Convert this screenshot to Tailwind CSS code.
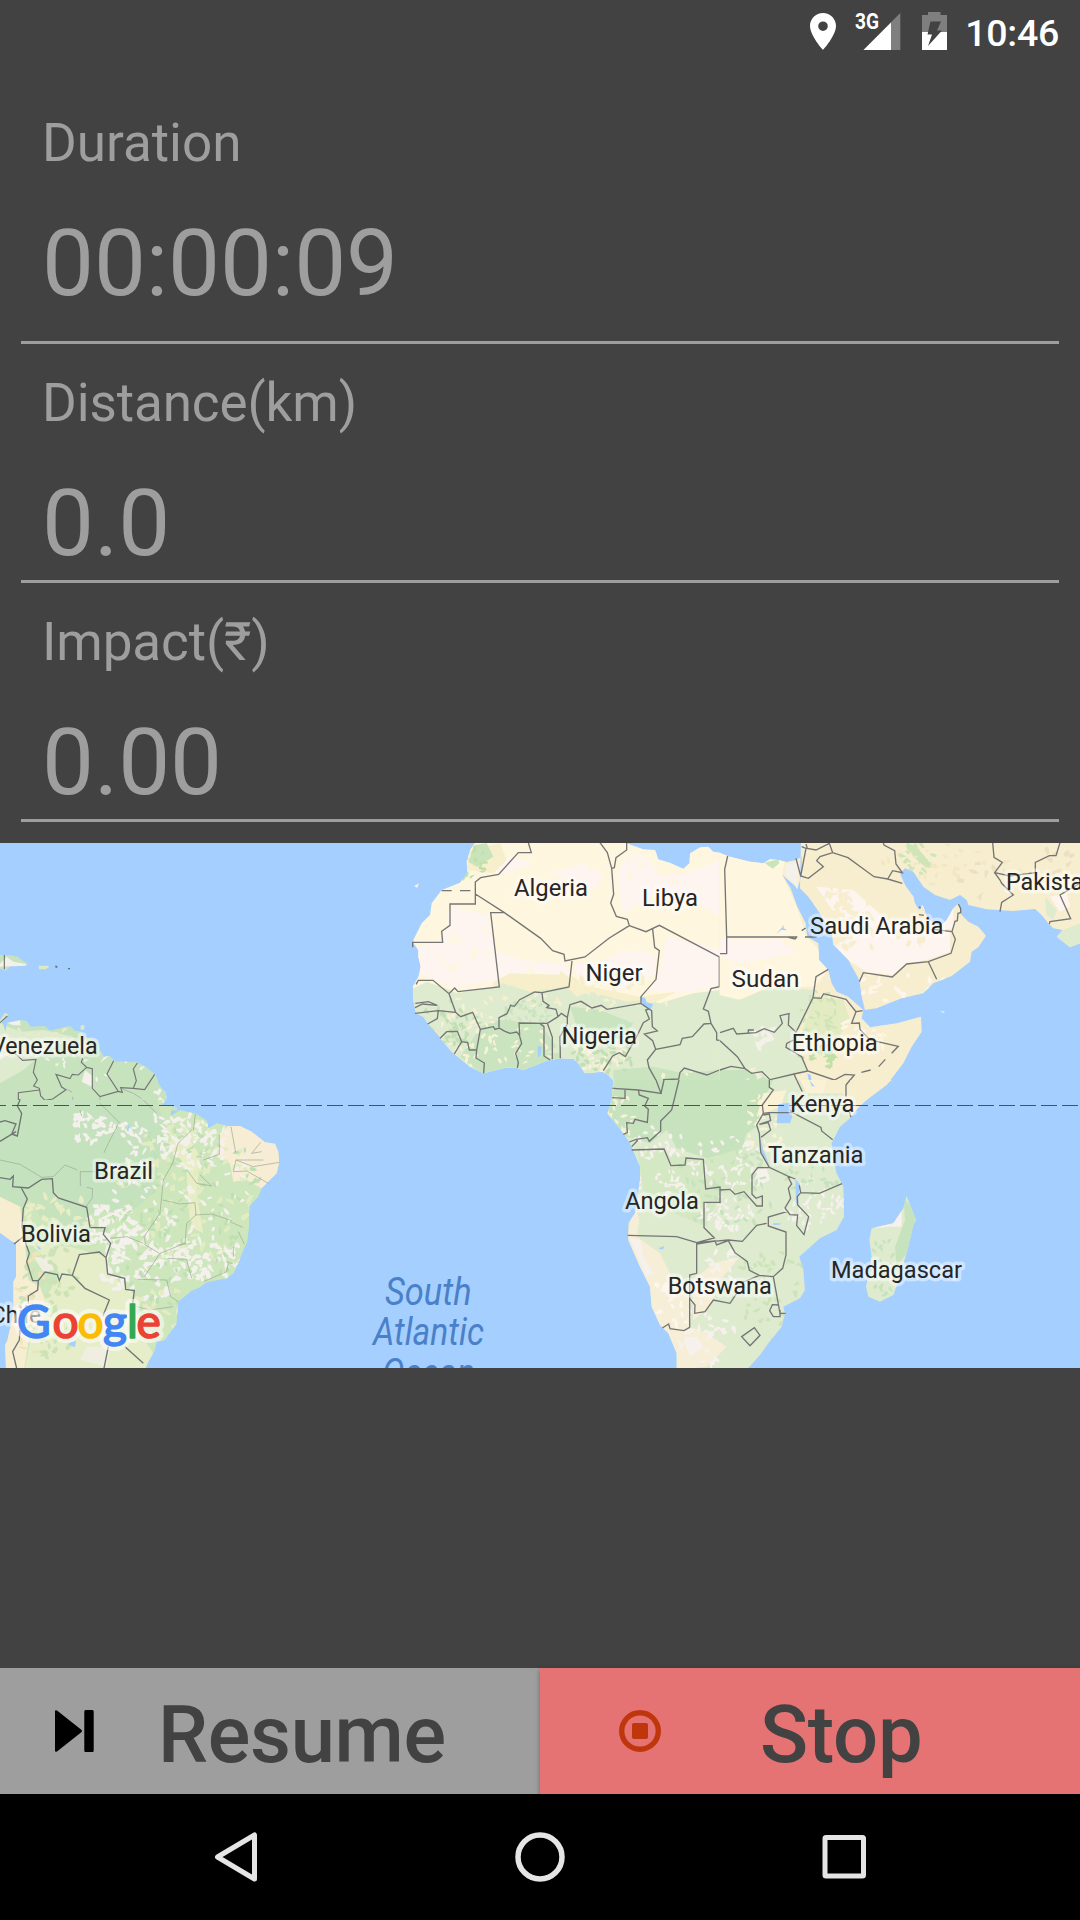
<!DOCTYPE html>
<html lang="en">
<head>
<meta charset="utf-8">
<title>Workout</title>
<script src="https://cdn.jsdelivr.net/npm/@tailwindcss/browser@4"></script>
</head>
<body class="w-[1080px] h-[1920px] overflow-hidden bg-[#424242] flex flex-col font-['Roboto',sans-serif]">

<!-- Status bar -->
<header class="h-[84px] shrink-0 flex items-start justify-end pr-[21px]">
  <svg class="w-[150px] h-[60px] mr-[11px]" viewBox="804 0 150 60">
    <path fill="#fff" fill-rule="evenodd" d="M823 13c-7.200 0-13 5.800-13 13 0 9.700 13 24 13 24s13-14.300 13-24c0-7.200-5.800-13-13-13zm0 18a4.800 4.800 0 1 1 0-9.600 4.800 4.800 0 0 1 0 9.600z"/>
    <path fill="#7f7f7f" d="M900.300 13V50H863.500z"/>
    <path fill="#fff" d="M891 22.500V50H863.500z"/>
    <text x="855" y="29" font-size="22" font-weight="700" fill="#fff" textLength="24" lengthAdjust="spacingAndGlyphs" stroke="#424242" stroke-width="2" paint-order="stroke">3G</text>
    <path fill="#7f7f7f" d="M922 15h6v-3h12.500v3h6.500v17h-25z"/>
    <path fill="#fff" d="M922 32h25v18h-25z"/>
    <path fill="#424242" d="M930.500 21.500H941l-4 9h5l-14 15.500 4-11.500h-4.500z"/>
  </svg>
  <span class="w-[94px] text-right whitespace-nowrap text-[37.500px] tracking-[-0.3px] leading-[44px] font-medium text-white pt-[11px]">10:46</span>
</header>

<!-- Stats -->
<main class="h-[759px] shrink-0 px-[21px] text-[#9e9e9e]">
  <section class="h-[260px] border-b-[3px] border-[#9e9e9e] pl-[21px] pt-[27px]">
    <h2 class="text-[53px] leading-[64px] font-normal">Duration</h2>
    <p class="text-[92.500px] tracking-[-0.1px] leading-[108px] mt-[35px]">00:00:09</p>
  </section>
  <section class="h-[239px] border-b-[3px] border-[#9e9e9e] pl-[21px] pt-[27px]">
    <h2 class="text-[53px] tracking-[-0.1px] leading-[64px] font-normal">Distance(km)</h2>
    <p class="text-[92.500px] tracking-[-0.1px] leading-[108px] mt-[35px]">0.0</p>
  </section>
  <section class="h-[239px] border-b-[3px] border-[#9e9e9e] pl-[21px] pt-[27px]">
    <h2 class="text-[53px] tracking-[-0.1px] leading-[64px] font-normal">Impact(₹)</h2>
    <p class="text-[92.500px] tracking-[-0.1px] leading-[108px] mt-[35px]">0.00</p>
  </section>
</main>

<!-- Map -->
<svg class="block w-[1080px] h-[525px] shrink-0 bg-[#a4cfff]" viewBox="0 843 1080 525">
  <defs>
    <clipPath id="cNW"><path d="M0 550L8 548 16 575 22 548 60 540 80 543 92 560 135 558 150 572 190 562 210 558 225 572 245 575 255 590 290 600 300 630 312 650 330 648 345 664 410 666 440 682 468 706 478 735 498 760 500 780 485 795 475 805 485 797 530 800 533 812 0 812Z"/></clipPath>
    <clipPath id="cSW"><path d="M0 0L490 0 480 15 515 18 512 48 540 30 590 42 620 62 625 85 650 70 685 78 720 78 755 95 795 127 825 131 835 155 838 185 830 220 785 265 775 290 748 318 747 380 742 425 730 450 715 490 700 520 680 535 620 547 600 562 575 572 535 605 532 640 530 670 495 720 470 725 465 750 445 785 435 810 18 810 15 735 22 722 40 640 40 545 48 530 48 430 30 420 0 398Z"/></clipPath>
    <clipPath id="cWA"><path d="M345 8L330 30 320 65 322 100 300 128 245 150 215 190 210 225 185 250 160 300 160 310 175 330 175 350 182 380 175 410 158 440 160 480 168 520 190 530 205 552 240 590 245 600 275 635 330 680 370 700 440 682 470 683 490 690 560 662 600 655 640 657 655 670 675 700 728 695 745 705 760 722 755 780 745 812 1082 812 1082 38 1060 35 1045 20 1020 22 990 40 988 70 970 86 930 68 895 58 885 30 850 28 800 10 790 0 350 0Z"/></clipPath>
    <clipPath id="cEA"><path d="M-2 38L30 50 90 65 130 70 150 58 175 60 200 66 228 60 245 50 245 105 232 148 222 135 187 105 212 145 232 200 257 250 262 290 295 310 297 360 325 390 335 430 350 455 385 470 430 510 425 535 450 562 530 550 603 530 605 575 575 620 550 670 500 735 440 780 405 812 -2 812Z M243 0L240 145 265 170 300 220 335 280 340 315 385 360 418 420 425 470 435 510 470 505 545 475 610 460 640 430 695 408 750 365 755 335 775 322 798 287 775 260 745 245 725 225 715 190 700 205 680 240 660 260 625 240 608 195 597 210 585 190 580 170 555 135 540 100 555 85 580 95 610 140 645 165 690 180 720 165 740 180 745 195 800 208 880 213 945 207 965 225 985 250 1000 265 1028 270 1010 290 1050 322 1082 310 1082 0Z"/></clipPath>
    <clipPath id="cSA"><path d="M165 0L155 60 142 100 190 160 210 190 240 260 240 300 225 400 205 430 205 480 240 560 270 620 275 680 300 735 325 760 350 820 350 870 560 870 600 825 625 790 665 740 675 700 670 680 720 655 735 630 730 570 718 530 780 475 830 450 852 410 850 320 830 280 820 240 815 190 840 140 870 115 900 75 995 0Z M1040 348L1068 420 1060 435 1045 500 1020 590 1000 645 960 665 925 650 918 620 935 530 928 480 935 445 1000 430 1030 385Z"/></clipPath>
  </defs>

  <!-- Guyanas, Venezuela and the Antilles -->
  <g transform="translate(0 840) scale(.33333)">
    <path fill="#c7e3be" d="M0 345H30L52 350 84 373 75 378 30 378 18 392 0 386Z"/>
    <path fill="#f4f0ea" d="M0 372L20 350 40 365 78 372 76 377 0 380Z"/>
    <path fill="#dceac2" d="M116 377h28l3 4-10 7h-20z"/>
    <path fill="#6d6d68" d="M165 377h7v6h-5zM204 384h6v4h-6z"/>
    <path fill="#dceac2" d="M242 556h12l-2 13h-10zM-5 548L15 518 26 524 0 552Z"/>
    <g clip-path="url(#cNW)">
      <path fill="#c7e3be" d="M0 500H600V830H0Z"/>
      <path fill="#deebce" d="M0 550L60 575 130 570 220 590 110 655 70 690 0 730Z"/>
      <path fill="#f4f0ea" d="M22 548L60 541 62 556 38 555ZM0 640L30 640 0 660ZM255 690l25 20-5 30-30-15zM312 650l18-5-30 25z"/>
      <g data-speckle="270 660 200 60 24 9 #f4f0ea"></g>
      <g data-speckle="490 775 30 30 8 12 #f4f0ea"></g>
      <g data-speckle="150 590 150 30 22 10 #ecebc8"></g>
    </g>
    <g fill="none" stroke="#757575" stroke-width="3.500">
      <path d="M13 345V388M22 528L0 548M45 640L68 661 108 658 100 697 112 720 101 738 118 745 122 768 135 781 158 777 198 749 185 741 168 703 210 716 217 703 235 705 260 682 244 667 248 655M260 682L277 686V745L300 770 355 754 321 702 341 662M355 754L367 757 362 743 400 745 434 749 464 703M400 745L409 722 400 687 412 669M118 750L55 758V778L70 785 52 795 60 810"/>
      <path stroke="#9aa598" stroke-width="2" d="M200 748L216 756M218 770L222 810M300 770V795L315 810M368 748L400 760 425 776M430 793L445 810"/>
    </g>
  </g>

  <!-- Brazil, Bolivia, Chile -->
  <g transform="translate(0 1100) scale(.33333)">
    <g clip-path="url(#cSW)">
      <path fill="#cde6bb" d="M0 0H850V820H0Z"/>
      <path fill="#c5e2be" d="M0 0H470L500 90 480 170 460 280 400 330 270 340 190 290 120 240 70 320 0 300Z"/>
      <path fill="#f7edd5" d="M685 78L730 70 850 120 850 220 785 265 740 240 700 245 690 190 650 170 660 100Z"/>
      <path fill="#f7edd0" d="M0 290L60 320 75 430 85 540 120 560 150 640 90 700 70 820 0 820Z"/>
      <path fill="#e6edc9" d="M90 430L210 440 320 470 340 530 400 580 420 700 460 760 440 820 70 820 110 640 180 520Z"/>
      <path fill="#c7e3be" d="M80 280L130 240 190 290 265 325 270 390 200 400 120 350Z"/>
      <path fill="#efeee0" d="M100 470L150 475 165 510 130 515ZM260 740L330 740 320 800 240 780Z"/>
      <path fill="#e9edc5" d="M500 130L560 100 600 170 590 280 610 400 570 380 560 220Z"/>
      <g data-speckle="560 270 200 230 90 17 #e2ecc2"></g>
      <g data-speckle="540 250 210 220 110 12 #f4f1ec"></g>
      <g data-speckle="265 85 55 50 26 15 #f4f1ec"></g>
      <g data-speckle="360 80 80 30 20 13 #f4f1ec"></g>
      <g data-speckle="340 380 80 80 44 19 #f4f1ec"></g>
      <g data-speckle="440 500 140 100 80 17 #f4f1ec"></g>
      <g data-speckle="640 470 100 70 46 16 #f4f1ec"></g>
      <g data-speckle="570 120 100 90 42 15 #f4f1ec"></g>
      <g data-speckle="470 640 90 90 40 16 #e6ebc4"></g>
      <g data-speckle="560 350 260 280 120 13 #bfe0b2"></g>
      <g data-speckle="180 340 110 60 25 18 #e8edc6"></g>
      <g data-speckle="150 600 90 180 50 16 #cde3b5"></g>
      <g data-speckle="470 100 100 60 20 14 #f4f1ec"></g>
      <g data-speckle="90 620 60 180 20 15 #efe3b8"></g>
    </g>
    <g fill="#a4cfff"><path d="M380 90l8-22-3 28zM108 435l15 10-5 5zM208 728l20-6-3 20-18-8z"/></g>
    <g fill="none" stroke="#9aa88f" stroke-width="2">
      <path d="M355 72L325 130 312 158M0 180L60 193 125 232 160 230 195 195 232 210M240 215H285M241 215V258M260 262L278 266 276 295 258 320M490 240L480 340 432 410 437 432M488 300L540 312 585 308 588 345 560 370 555 430 480 460 433 530M585 345L635 342 695 362M478 460L432 432M505 475L560 478 575 535M560 430L530 436M693 80L707 158M658 105V163L610 180M534 130L518 190 490 240M575 90L534 130M586 42L580 92M565 215L590 250 635 258 600 225M782 127L755 160 785 155M838 187L760 200 708 180 700 215 740 213 805 250M707 180L790 180M680 485L700 492M610 545L680 515 685 490M413 538L500 540 512 590 535 605M330 415L380 410 430 430M715 395L733 432M700 440V470M690 365L728 382M240 30L245 48M300 10L360 70M430 0L470 40M410 620L450 630 520 620"/>
    </g>
    <g fill="none" stroke="#6f7573" stroke-width="4">
      <path d="M60 0L52 18 65 40 52 108 35 102 48 72 15 62 0 66M0 124L48 95M0 233L30 238 40 228 38 260 85 264 125 238 157 236 160 278 175 294 260 322 270 383H315L310 403 332 430 318 473 298 456 238 464 217 526 186 522 178 542 172 524 135 516 115 542H98L80 485 88 460 78 433 66 380 70 325 82 297 64 264M115 542L113 570 85 588V612M70 410L42 432M318 473L323 522 374 535 377 568 403 572 398 610M217 526L255 565 328 600 308 650M325 740L312 805M375 740L430 790M60 690L58 720 38 755 50 805"/>
    </g>
  </g>

  <!-- West and North Africa -->
  <g transform="translate(360 840) scale(.33333)">
    <g clip-path="url(#cWA)">
      <path fill="#fff6df" d="M0 0H1085V815H0Z"/>
      <path fill="#fff5f0" d="M800 40L860 50 900 110 980 100 1082 60 1082 230 1000 180 870 170 790 220 770 110ZM270 200L390 225 405 330 480 360 610 370 630 400 560 420 410 420 290 440 250 430 180 400 170 320 250 300ZM640 370L720 370 790 330 880 340 890 400 800 450 740 420 660 430ZM920 290L1082 330 1082 440 960 460 870 450 900 400ZM340 90L450 50 520 70 440 100ZM570 100L680 70 730 110 700 150Z"/>
      <path fill="#f7eecb" d="M330 30L420 10 440 60 400 100 320 90ZM400 425L450 400 620 405 640 430 840 470 950 455 860 500 640 490 400 460Z"/>
      <path fill="#c9e4ba" d="M345 15L380 10 400 50 350 80 325 65Z"/>
      <path fill="#deebcf" d="M150 450L200 425 270 450 290 460 400 440 430 430 510 455 620 440 650 470 690 455 800 485 850 480 900 490 1000 460 1082 450 1082 815 740 815 720 710 300 710 150 520Z"/>
      <path fill="#c9e4be" d="M350 580L480 585 560 640 600 640 600 680 370 705 300 650ZM360 560L420 540 540 550 590 620 480 680 380 690ZM760 690L880 680 970 700 1082 690 1082 820 740 820 760 740ZM630 500L720 510 820 550 800 580 650 560Z"/>
      <g data-speckle="330 60 50 60 25 11 #bfe0a8"></g>
      <g data-speckle="310 590 110 90 45 12 #f7f1d6"></g>
      <g data-speckle="480 620 110 60 22 11 #f7f1d6"></g>
      <g data-speckle="500 520 80 40 35 12 #c9e4be"></g>
      <g data-speckle="270 550 90 70 35 13 #c2dfb4"></g>
      <g data-speckle="720 640 80 60 45 13 #f7f1d6"></g>
      <g data-speckle="620 480 330 30 34 12 #f6f0ce"></g>
      <g data-speckle="740 640 100 60 35 14 #c2dfb4"></g>
      <g data-speckle="640 425 250 22 26 20 #f7eecb"></g>
      <g data-speckle="820 110 240 90 14 22 #fff6df"></g>
      <g data-speckle="400 330 180 90 20 18 #fff6df"></g>
      <g data-speckle="970 740 90 50 16 12 #f7f1d6"></g>
    </g>
    <path fill="#f7f1ea" d="M162 138l15-8-5 14z"/>
    <path fill="#a4cfff" d="M840 470l15 3 5 14 20 5-8 16-20-8zM533 618l12 2-3 25-8 8z"/>
    <g fill="none" stroke="#757575" stroke-width="4">
      <path d="M505 8L514 38H475L416 103 362 113 346 126V192H270V256L245 274 248 307H158V322M245 152H275M300 152H331M346 162L432 217 542 295 578 332 612 343 615 363 675 351 748 294 808 257 802 238 769 229 752 189 761 163 755 85 742 38 720 8M755 85L763 83 768 53 800 30V8M808 257L858 275 898 256 1078 351V440L1053 446 1030 507 1045 514 1053 550 1032 552 997 590 967 595 960 614 887 628 862 660 867 683 903 748 911 719 956 717 960 698 973 684 1041 705 1078 690M432 217L392 218 418 441 294 455 284 444 267 461 219 421H175L168 433M267 461L287 517 302 530 338 517 361 568 350 630 348 654 373 669 371 700M287 517L235 512 165 520M166 490L205 485 232 496 188 492 165 503M235 512L232 536 203 552M240 595L260 575 292 574 305 605 283 642M305 605L323 608 328 630 350 630M361 568L400 560 405 568 417 564 435 574 450 580 470 576 478 585 485 610 467 640 475 668 472 684M417 564V533L441 521 452 496 463 499 479 479 524 456 546 458 627 441 636 363M546 458L549 484 567 496 560 503 588 508 594 530 562 550 477 549 479 585M538 549L552 560 552 648 570 660M562 550L577 592V658M594 530L604 520 622 532V552L600 590 601 655M622 532L630 494 663 484 696 504 724 496 741 508 843 490 867 507 857 510 868 537 850 548 830 590 796 650 778 638 758 648 730 692M843 490V470L888 418 898 332 884 322 878 268M867 507L875 512 877 560 892 573 853 582 878 602 887 628M757 745L830 748 903 758V748M795 748V777L755 775M835 750L860 765 862 780 850 790 866 810M956 717L935 810M1053 550L1070 578V600L1082 602"/>
    </g>
  </g>

  <!-- East Africa, Arabia, Iran and Pakistan -->
  <g transform="translate(720 840) scale(.33333)">
    <g clip-path="url(#cEA)">
      <path fill="#f7eecf" d="M-2 0H1085V815H-2Z"/>
      <path fill="#fff6df" d="M-2 30H200L187 105 230 200 260 290 297 330 325 390 285 440 180 440 50 480 -2 470Z"/>
      <path fill="#f4f0ea" d="M195 75L235 65 232 140 195 105Z"/>
      <path fill="#c9e4ba" d="M133 68L175 58 178 70 158 86Z"/>
      <path fill="#fff5f0" d="M290 140L400 150 500 240 560 270 690 275 690 335 620 360 560 370 520 405 440 395 385 360 340 310 400 290 330 200ZM0 300L180 300 230 340 60 370 0 350ZM640 240L700 205 700 265 660 270ZM990 170L1040 160 1050 200 1020 215Z"/>
      <path fill="#deebcf" d="M-2 465L60 480 150 440 280 450 290 475 230 580 210 620 245 650 260 690 225 705 240 760 160 815 -2 815ZM270 720L370 730 375 780 290 780ZM1030 270L1080 250 1080 310 1050 322 1010 290ZM975 170L1010 210 1000 240 980 225Z"/>
      <path fill="#c7e3be" d="M-2 690L80 690 150 720 150 750 125 815 -2 815Z"/>
      <path fill="#e3ebc3" d="M285 470L370 480 390 540 350 600 240 590Z"/>
      <path fill="#cfe5b8" d="M560 8L590 20 640 80 620 85 580 50Z"/>
      <g data-speckle="470 230 180 110 55 22 #f7eecf"></g>
      <g data-speckle="360 220 90 80 40 15 #f7eecf"></g>
      <g data-speckle="300 520 60 70 30 12 #cfe5b8"></g>
      <g data-speckle="300 650 60 40 26 13 #c2dfa8"></g>
      <g data-speckle="420 590 90 60 20 13 #fdf6e3"></g>
      <g data-speckle="560 440 160 50 25 15 #fff5ec"></g>
      <g data-speckle="130 590 30 40 8 20 #f4f0ea"></g>
      <g data-speckle="700 80 220 70 30 13 #f1e7c3"></g>
      <g data-speckle="770 110 60 70 6 18 #ebe0c5"></g>
      <g data-speckle="600 60 60 50 18 14 #cfe5b8"></g>
      <g data-speckle="90 740 70 60 14 14 #f3efd0"></g>
      <g data-speckle="1010 60 60 50 8 16 #ebe0c5"></g>
    </g>
    <path fill="#a4cfff" d="M168 283l25-29-3 10 12 7-18-2zM262 700l10 5 3 20 10 15-18-15z"/>
    <path fill="#f7f1ea" d="M660 512l15 3-5 4z"/>
    <g fill="none" stroke="#757575" stroke-width="4">
      <path d="M23 48L14 88 20 291H232M255 291H290M20 291V341H0M205 292L225 297 230 292M245 272L257 264M228 55L242 108 265 115 310 80 290 62 300 50 338 38 384 53 462 110 503 117 547 130M242 108L258 25 245 20M258 12L262 25 288 30 328 10 338 38M503 117L518 92 547 98 528 72 524 32 492 15 490 8M818 8L822 52 847 67 824 98 840 120 845 130 880 165 845 187 840 215M824 98L870 108 946 98V67L988 47H1008L1020 8M1080 130L1020 165 1052 236 990 245 988 252M715 192L722 205V218L714 220 712 242 705 244 696 275 706 298 693 340 625 365 560 372 517 411 430 398 418 425M625 365L650 418M696 275L640 268M597 200L602 205M597 224L612 226M325 388L288 410 279 473 303 475 311 461 378 478 408 515 428 512M408 515L395 550 418 549 420 568 450 600 535 619 515 640M279 473L228 577M496 658L476 680M452 690L424 697M220 600L200 610 198 622 245 650 263 693 343 720 375 703 403 705 378 735V780M263 693L222 702 150 719 160 750 125 800M222 702L243 750M228 577L205 555 207 521 180 527 187 550 163 577 132 566 108 578 50 582 40 565 0 578M85 580V570H102M0 602L52 650 75 686 33 679 0 690M75 686L95 700 126 695 150 719"/>
    </g>
  </g>

  <!-- Central and Southern Africa, Madagascar -->
  <g transform="translate(560 1080) scale(.33333)">
    <g clip-path="url(#cSA)">
      <path fill="#deebcf" d="M100 0H1100V880H100Z"/>
      <path fill="#f7eecf" d="M720 0H1000L870 115 850 40 750 40Z"/>
      <path fill="#c7e3be" d="M155 0H640L605 70 590 140 560 160 545 210 440 235 350 205 320 150 270 190 200 170 130 100Z"/>
      <path fill="#d5e8c4" d="M230 200L430 240 560 200 580 330 480 340 440 440 340 400 250 330Z"/>
      <path fill="#f7eed8" d="M222 360L238 420 230 470 300 520 340 600 390 610 390 740 440 760 500 800 440 860 340 870 320 760 250 690 200 480ZM400 600L460 550 540 530 480 600 450 680 400 720Z"/>
      <path fill="#f6f1ec" d="M210 475L240 480 250 530 280 580 260 590ZM370 775L410 770 430 800 390 830ZM580 270L620 265 630 300 590 320Z"/>
      <path fill="#c7e3be" d="M1030 350L1070 400 1060 440 1040 520 1010 560 1005 500 1035 420Z"/>
      <path fill="#f6f1ec" d="M1025 390L1025 440 985 440 940 445 990 425Z"/>
      <path fill="#fbf2d5" d="M610 40L680 30 660 80 590 110ZM720 0L800 0 790 40 740 40Z"/>
      <g data-speckle="300 190 80 50 34 11 #f6f1ec"></g>
      <g data-speckle="500 250 120 80 60 11 #f6f1ec"></g>
      <g data-speckle="300 330 100 60 38 11 #f6f1ec"></g>
      <g data-speckle="500 400 80 50 38 12 #f6f1ec"></g>
      <g data-speckle="760 370 90 80 50 11 #f6f1ec"></g>
      <g data-speckle="620 130 60 100 40 11 #fbf2d5"></g>
      <g data-speckle="760 270 90 70 30 13 #c7e3be"></g>
      <g data-speckle="500 330 180 130 50 13 #c7e3be"></g>
      <g data-speckle="490 560 60 60 16 14 #f6f1ec"></g>
      <g data-speckle="640 640 110 160 40 13 #cbe4b8"></g>
      <g data-speckle="440 760 90 100 30 14 #f6f1ec"></g>
      <g data-speckle="340 660 60 90 18 14 #fdf6ec"></g>
      <g data-speckle="180 110 40 70 26 11 #f7f1d6"></g>
      <g data-speckle="970 560 40 90 22 12 #c7e3be"></g>
    </g>
    <g fill="#a4cfff"><path d="M655 73L690 68 697 110 690 130 650 130ZM748 0L765 20 755 18ZM597 160L610 210 628 255 603 215ZM706 298L720 312 712 370 728 392 708 370ZM298 503L312 498 310 508 298 508ZM640 430L662 430 660 434 640 435Z"/></g>
    <g fill="none" stroke="#757575" stroke-width="4">
      <path d="M160 25L235 30 303 40 288 0M303 40L312 0M195 30V55L157 53M235 30L238 45 265 55 254 78 265 88 262 127 225 118 220 130 200 128 202 158 190 163M357 0L335 90 302 123V153L268 184 262 173 228 178 208 186M228 178L232 182 215 200M215 210L312 207 333 257 375 255 378 234 430 238 437 327 480 321V367H432V443L463 474 410 488 350 470 203 466M480 330L510 328 525 343 552 335 590 378H607V348L588 355 576 343V285L593 263 628 262 602 217 598 160 590 135 610 100 607 75 640 30 628 22V0M598 133L625 128 632 150 603 172M610 100L625 98H698L783 142 785 153 818 179M610 105L628 102 632 122 598 133M698 98L690 90M628 262L683 288 706 297M683 288L695 312 685 325 692 355 675 384 690 404 713 405 710 437 732 464 746 410 713 375 712 350 722 338 718 316M722 338L778 340 846 311M683 394L625 411V438L678 456V525L668 565 640 590 598 586 568 571 562 545 525 518 505 482 470 495 465 483 410 488V580L389 585V742L372 752 330 746 326 732 307 744M410 492L460 484 505 480 547 484 590 436 620 430M389 655L405 675 404 700 435 695 460 660 510 670 530 640M540 610L598 586M640 590L660 700H677M655 675L637 674 629 692 640 710H660L660 690M545 770L583 743 600 766 570 797ZM710 0L727 35M870 0L858 15V50M868 95L873 112"/>
    </g>
  </g>

  <!-- Equator -->
  <path d="M-9 1105.500H1080" stroke="#84384f" stroke-width="1.300" stroke-dasharray="15.500 5.500" fill="none" shape-rendering="crispEdges"/>

  <!-- Country labels -->
  <g font-size="24.500" fill="#262626" stroke="#fff" stroke-opacity=".45" stroke-width="7" stroke-linejoin="round" paint-order="stroke">
    <text x="-9" y="1053.700" textLength="106.500" lengthAdjust="spacingAndGlyphs">Venezuela</text>
    <text x="94" y="1178.700" textLength="59" lengthAdjust="spacingAndGlyphs">Brazil</text>
    <text x="21" y="1241.700" textLength="70" lengthAdjust="spacingAndGlyphs">Bolivia</text>
    <text x="-9" y="1322.700" textLength="50" lengthAdjust="spacingAndGlyphs">Ch<tspan fill="#999">ile</tspan></text>
    <text x="514" y="895.700" textLength="74" lengthAdjust="spacingAndGlyphs">Algeria</text>
    <text x="642" y="906" textLength="56" lengthAdjust="spacingAndGlyphs">Libya</text>
    <text x="585.500" y="980.700" textLength="57" lengthAdjust="spacingAndGlyphs">Niger</text>
    <text x="561.500" y="1043.500" textLength="75.500" lengthAdjust="spacingAndGlyphs">Nigeria</text>
    <text x="810" y="933.700" textLength="133.500" lengthAdjust="spacingAndGlyphs">Saudi Arabia</text>
    <text x="1006" y="889.700" textLength="90" lengthAdjust="spacingAndGlyphs">Pakistan</text>
    <text x="731.500" y="986.700" textLength="68" lengthAdjust="spacingAndGlyphs">Sudan</text>
    <text x="791.700" y="1050.700" textLength="86" lengthAdjust="spacingAndGlyphs">Ethiopia</text>
    <text x="790" y="1111.700" textLength="64.500" lengthAdjust="spacingAndGlyphs">Kenya</text>
    <text x="768" y="1162.700" textLength="95.500" lengthAdjust="spacingAndGlyphs">Tanzania</text>
    <text x="625" y="1208.700" textLength="74" lengthAdjust="spacingAndGlyphs">Angola</text>
    <text x="667.700" y="1293.700" textLength="104" lengthAdjust="spacingAndGlyphs">Botswana</text>
    <text x="831" y="1277.700" textLength="131" lengthAdjust="spacingAndGlyphs">Madagascar</text>
  </g>
  <g font-size="38" font-style="italic" fill="#4a80c8">
    <text x="385" y="1304.500" textLength="86.500" lengthAdjust="spacingAndGlyphs">South</text>
    <text x="373" y="1345" textLength="111" lengthAdjust="spacingAndGlyphs">Atlantic</text>
    <text x="382" y="1386" textLength="93" lengthAdjust="spacingAndGlyphs">Ocean</text>
  </g>

  <!-- Attribution -->
  <g font-family="Lato, sans-serif" font-size="46" stroke-linejoin="round">
    <text x="17 52.500 77.500 103 127 136.500" y="1338" fill="none" stroke="#fff" stroke-opacity=".55" stroke-width="10">Google</text>
    <text x="17 52.500 77.500 103 127 136.500" y="1338" stroke-width="1.600"><tspan fill="#4285f4" stroke="#4285f4">G</tspan><tspan fill="#ea4335" stroke="#ea4335">o</tspan><tspan fill="#fbbc05" stroke="#fbbc05">o</tspan><tspan fill="#4285f4" stroke="#4285f4">g</tspan><tspan fill="#34a853" stroke="#34a853">l</tspan><tspan fill="#ea4335" stroke="#ea4335">e</tspan></text>
  </g>
</svg>

<div class="flex-1"></div>

<!-- Actions -->
<div class="h-[126px] shrink-0 flex text-[79.500px] tracking-[-0.3px] leading-[94px] font-medium text-[#424242]">
  <button class="w-[540px] bg-[#9e9e9e] flex items-center pl-[55px]">
    <svg class="w-[39px] h-[42px] shrink-0" viewBox="0 0 39 42"><path d="M0 1.500Q0-.5 2 .500L26 19.500Q28 21 26 22.500L2 41.500Q0 42.500 0 40.500ZM30.500 0H37.500Q38.700 0 38.700 1.500V40.500Q38.700 42 37.500 42H30.500Q29.300 42 29.300 40.500V1.500Q29.300 0 30.500 0Z"/></svg>
    <span class="ml-[64px] pt-[8px]">Resume</span>
  </button>
  <button class="w-[540px] bg-[#e57373] flex items-center pl-[79px] shadow-[0_2px_5px_rgba(0,0,0,0.35)]">
    <svg class="w-[42px] h-[42px] shrink-0" viewBox="0 0 42 42"><circle cx="21" cy="21" r="18.300" fill="none" stroke="#bf360c" stroke-width="5.400"/><rect x="13" y="13" width="16" height="16" rx="2" fill="#bf360c"/></svg>
    <span class="ml-[99px] pt-[8px]">Stop</span>
  </button>
</div>

<!-- Navigation bar -->
<nav class="h-[126px] shrink-0 bg-black flex items-center justify-between px-[212px]">
  <svg class="w-[50px] h-[54px]" viewBox="212 1830 50 54"><path d="M254.500 1835V1879L217.500 1857Z" fill="none" stroke="#e5e5e5" stroke-width="5" stroke-linejoin="round"/></svg>
  <svg class="w-[54px] h-[54px]" viewBox="513 1830 54 54"><circle cx="540" cy="1857" r="22" fill="none" stroke="#e5e5e5" stroke-width="5.500"/></svg>
  <svg class="w-[50px] h-[54px]" viewBox="818 1830 50 54"><rect x="825" y="1837.500" width="38.500" height="38.500" rx="1" fill="none" stroke="#e5e5e5" stroke-width="5"/></svg>
</nav>

<script>
  // Scatter small terrain patches: "cx cy rx ry count size color"
  let seed = 7;
  const rnd = () => (seed = (seed * 16807) % 2147483647) / 2147483647;
  document.querySelectorAll('[data-speckle]').forEach(g => {
    const p = g.dataset.speckle.split(' ');
    const [cx, cy, rx, ry, n, size] = p.slice(0, 6).map(Number);
    let d = '';
    for (let i = 0; i < n; i++) {
      const a = rnd() * 6.283, r = Math.sqrt(rnd());
      const x = cx + Math.cos(a) * r * rx, y = cy + Math.sin(a) * r * ry;
      const tilt = rnd() * 3.14;
      for (let k = 0; k < 6; k++) {
        const t = k * 1.047, q = size * (0.35 + rnd() * 0.85);
        const u = Math.cos(t) * q, v = Math.sin(t) * q * 0.5;
        d += (k ? 'L' : 'M') + (x + u * Math.cos(tilt) - v * Math.sin(tilt)).toFixed(1) + ' ' + (y + u * Math.sin(tilt) + v * Math.cos(tilt)).toFixed(1);
      }
      d += 'Z';
    }
    const path = document.createElementNS('http://www.w3.org/2000/svg', 'path');
    path.setAttribute('d', d);
    path.setAttribute('fill', p[6]);
    g.appendChild(path);
  });
</script>
</body>
</html>
